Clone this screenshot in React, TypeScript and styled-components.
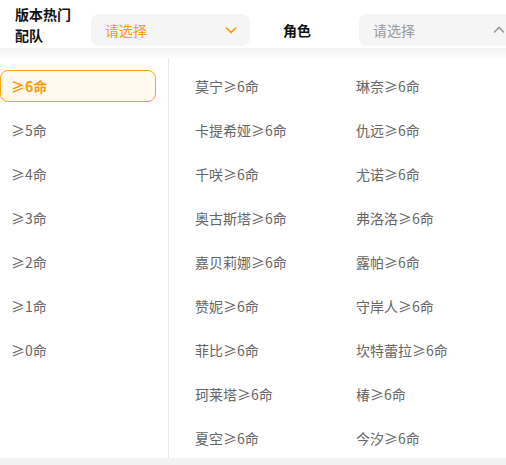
import React, { useState } from 'react'
import styled, { createGlobalStyle } from 'styled-components'

const GlobalStyle = createGlobalStyle`
  html, body {
    margin: 0;
    padding: 0;
    background: #fff;
  }
  body {
    font-family: "Noto Sans CJK SC", "Noto Sans", sans-serif;
    width: 506px;
    height: 465px;
    overflow: hidden;
  }
`

const Page = styled.div`
  width: 506px;
  height: 465px;
  display: flex;
  flex-direction: column;
  background: #f2f2f2;
  overflow: hidden;
`

const Header = styled.div`
  height: 48px;
  flex-shrink: 0;
  display: flex;
  align-items: center;
  background: #fff;
  padding-left: 15px;
  white-space: nowrap;
`

const Label = styled.div<{ $width: number; $indent?: number }>`
  width: ${p => p.$width}px;
  padding-left: ${p => p.$indent || 0}px;
  flex-shrink: 0;
  font-size: 14px;
  font-weight: 700;
  line-height: 21px;
  color: #111;
  margin-top: ${p => (p.$indent ? 12 : 2)}px;
`

const Select = styled.div<{ $active?: boolean; $width: number }>`
  width: ${p => p.$width}px;
  flex-shrink: 0;
  height: 32px;
  margin-top: 12px;
  box-sizing: border-box;
  border-radius: 8px;
  background: #f5f5f5;
  display: flex;
  align-items: center;
  justify-content: space-between;
  padding: 0 12px 0 14px;
  font-size: 14px;
  color: ${p => (p.$active ? '#ff9b05' : '#999')};
`

const Chevron = styled.svg`
  width: 14px;
  height: 14px;
  flex-shrink: 0;
`

const Shade = styled.div`
  height: 10px;
  flex-shrink: 0;
  background: linear-gradient(#f3f3f3, #fbfbfb);
`

const Panel = styled.div`
  height: 400px;
  flex-shrink: 0;
  display: flex;
  background: #fff;
`

const Side = styled.div`
  width: 168px;
  flex-shrink: 0;
  border-right: 1px solid #e9e9e9;
  padding-top: 6px;
`

const SideItem = styled.div`
  height: 44px;
  display: flex;
  align-items: center;
`

const SideText = styled.div<{ $selected?: boolean }>`
  width: 156px;
  height: 32px;
  box-sizing: border-box;
  display: flex;
  align-items: center;
  padding-left: 10px;
  border-radius: 8px;
  font-size: 14px;
  border: 1px solid ${p => (p.$selected ? '#ffa316' : 'transparent')};
  background: ${p => (p.$selected ? '#fff9f0' : 'transparent')};
  color: ${p => (p.$selected ? '#ff9b05' : '#666')};
  font-weight: ${p => (p.$selected ? 700 : 400)};
`

const Grid = styled.div`
  flex: 1;
  padding: 6px 0 0 26px;
  display: grid;
  grid-template-columns: 161px 1fr;
  grid-auto-rows: 44px;
`

const Cell = styled.div`
  display: flex;
  align-items: center;
  font-size: 14px;
  color: #666;
  white-space: nowrap;
`

const levels = ['≥6命', '≥5命', '≥4命', '≥3命', '≥2命', '≥1命', '≥0命']

const characters = [
  '莫宁', '琳奈', '卡提希娅', '仇远', '千咲', '尤诺', '奥古斯塔', '弗洛洛',
  '嘉贝莉娜', '露帕', '赞妮', '守岸人', '菲比', '坎特蕾拉', '珂莱塔', '椿',
  '夏空', '今汐',
]

const App = () => {
  const [level, setLevel] = useState(0)
  return (
    <Page>
      <GlobalStyle />
      <Header>
        <Label $width={76}>版本热门<br />配队</Label>
        <Select $active $width={159}>
          请选择
          <Chevron viewBox="0 0 14 14" fill="none" stroke="#ff9b05" strokeWidth="1.6">
            <path d="M2 4.5l5 5 5-5" />
          </Chevron>
        </Select>
        <Label $width={76} $indent={33}>角色</Label>
        <Select $width={159}>
          请选择
          <Chevron viewBox="0 0 14 14" fill="none" stroke="#999" strokeWidth="1.6">
            <path d="M2 9.5l5-5 5 5" />
          </Chevron>
        </Select>
      </Header>
      <Shade />
      <Panel>
        <Side>
          {levels.map((l, i) => (
            <SideItem key={l} onClick={() => setLevel(i)}>
              <SideText $selected={i === level}>{l}</SideText>
            </SideItem>
          ))}
        </Side>
        <Grid>
          {characters.map(c => (
            <Cell key={c}>{c}{levels[level]}</Cell>
          ))}
        </Grid>
      </Panel>
    </Page>
  )
}

export default App
